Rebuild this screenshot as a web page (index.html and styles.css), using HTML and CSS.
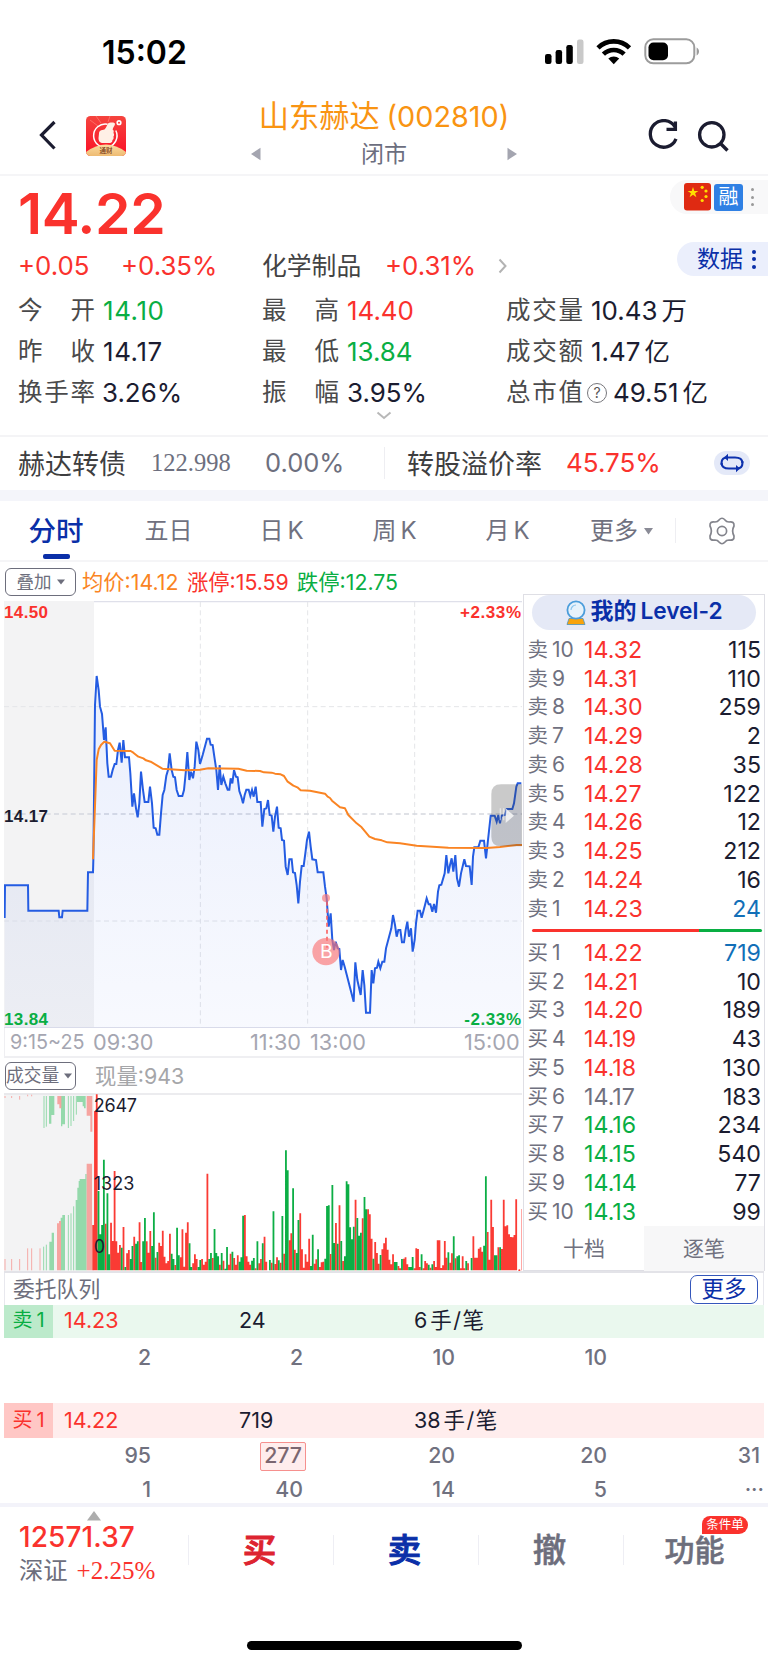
FILE: index.html
```html
<!DOCTYPE html>
<html lang="zh-CN">
<head>
<meta charset="utf-8">
<title>山东赫达 (002810)</title>
<link rel="stylesheet" href="styles.css">
</head>
<body>
<div class="screen">
  <div class="status">
    <span class="clock">15:02</span>
    <svg class="status-icons" width="160" height="30" viewBox="0 0 160 30">
      <g><rect x="1" y="16" width="6.500" height="10" rx="2.200"/><rect x="11.600" y="12" width="6.500" height="14" rx="2.200"/><rect x="22.300" y="7" width="6.500" height="19" rx="2.200"/><rect x="33" y="1.500" width="6.500" height="24.500" rx="2.200" fill="#c9c9c9"/></g>
      <g fill="none" stroke="#000" stroke-width="4.600"><path d="M54 9.800a22.500 22.500 0 0 1 31.500 0"/><path d="M59.400 16.200a14.800 14.800 0 0 1 20.700 0"/></g>
      <path d="M64.300 20.600a8 8 0 0 1 10.900 0L69.750 26.200z"/>
      <rect x="101.300" y="1.300" width="49" height="24" rx="8" fill="none" stroke="#9c9c9c" stroke-width="2"/>
      <rect x="104.500" y="4.500" width="19.500" height="17.800" rx="5"/><path d="M152.600 9.500c3.200 1.400 3.200 6.600 0 8z" fill="#9c9c9c"/>
    </svg>
  </div>

  <header class="header">
    <svg class="back" width="20" height="32" viewBox="0 0 20 32"><path d="M16.500 3L3.500 16L16.500 29.500" fill="none" stroke="#1b1c30" stroke-width="3.200"/></svg>
    <svg class="app" width="40" height="40" viewBox="0 0 40 40">
      <defs><linearGradient id="red" x1="0" y1="0" x2="0" y2="1"><stop offset="0" stop-color="#f5443e"/><stop offset="1" stop-color="#fb1027"/></linearGradient>
      <linearGradient id="gold" x1="0" y1="0" x2="0" y2="1"><stop offset="0" stop-color="#fbdba0"/><stop offset="1" stop-color="#eebb72"/></linearGradient>
      <clipPath id="appclip"><rect width="40" height="40" rx="4.500"/></clipPath></defs>
      <g clip-path="url(#appclip)"><rect width="40" height="40" fill="url(#red)"/>
      <path d="M10 0l5 7M24 0l-2 6M4 4l8 6" stroke="#ff8d80" stroke-width=".6"/>
      <path d="M21.500 8.200A11.700 11.700 0 1 0 29.800 14.500" fill="none" stroke="#fff" stroke-width="1.500"/>
      <path d="M13 17.500c0-2.200 1.500-3.500 3.400-3.500 1.500 0 2.800-.8 3.600-2.500l1.700-3.600c1.200-1.900 7-2 7.300-.2.200 1.600-1.800 3.200-2.400 5.800 1.600 1 1.200 2.800.8 3.600 1 1 .9 2.800 0 3.600.6 1.400 0 2.800-1 3.400.2 1.600-.8 3-2.600 3h-6.500C13.800 27 12.500 25 12.500 22z" fill="#fff0e6"/>
      <circle cx="33" cy="6.700" r="2.600" fill="#fff"/><circle cx="33" cy="6.700" r="1" fill="#f33"/>
      <path d="M0 40V36Q20 21 40 36V40z" fill="url(#gold)"/></g>
      <text x="20" y="37" class="app-text">通财</text>
    </svg>
    <div class="titles">
      <div class="title">山东赫达<span>(002810)</span></div>
      <div class="market">
        <svg width="12" height="14" viewBox="0 0 12 14"><path d="M1 7L10.500 .8V13.200z"/></svg>
        <span>闭市</span>
        <svg width="12" height="14" viewBox="0 0 12 14"><path d="M11 7L1.500 .8V13.200z"/></svg>
      </div>
    </div>
    <svg class="tools" width="84" height="34" viewBox="0 0 84 34" fill="none" stroke="#1b1c30" stroke-width="3.300">
      <path d="M28 8A13.300 13.300 0 1 0 29 19.800"/><path d="M19.500 10.300H28.400V2.500"/>
      <circle cx="64.800" cy="15.800" r="12.200"/><path d="M73.500 24.500L80.500 31.500"/>
    </svg>
  </header>

  <section class="quote">
    <div class="flags">
      <svg width="28" height="28" viewBox="0 0 28 28"><rect width="27" height="27.500" rx="3" fill="#df2a12"/><g fill="#ffde00"><path d="M9 4l1.300 3.900h4.100l-3.300 2.400 1.300 3.900L9 11.800l-3.400 2.400 1.300-3.900-3.300-2.400h4.100z"/><circle cx="18.200" cy="4.300" r="1.600"/><circle cx="22" cy="8" r="1.600"/><circle cx="22" cy="13.500" r="1.600"/><circle cx="18.200" cy="17.500" r="1.600"/></g></svg>
      <span class="rong">融</span>
      <span class="dots"><i></i><i></i><i></i></span>
    </div>
    <div class="data-btn">数据<span class="dots"><i></i><i></i><i></i></span></div>
    <div class="price">14.22</div>
    <div class="change"><span class="c1">+0.05</span><span class="c2">+0.35%</span><span class="sector">化学制品</span><span class="c3">+0.31%</span>
      <svg width="10" height="16" viewBox="0 0 10 16"><path d="M1.500 1.500L7.500 8L1.500 14.500" fill="none" stroke="#b3b3b3" stroke-width="2"/></svg></div>
    <div class="stats">
      <div><span class="lab"><b>今</b><b>开</b></span><em class="dn wide">14.10</em></div>
      <div><span class="lab"><b>最</b><b>高</b></span><em class="up">14.40</em></div>
      <div><span class="lab"><b>成</b><b>交</b><b>量</b></span><em>10.43<u>万</u></em></div>
      <div><span class="lab"><b>昨</b><b>收</b></span><em class="wide">14.17</em></div>
      <div><span class="lab"><b>最</b><b>低</b></span><em class="dn">13.84</em></div>
      <div><span class="lab"><b>成</b><b>交</b><b>额</b></span><em>1.47<u>亿</u></em></div>
      <div><span class="lab"><b>换</b><b>手</b><b>率</b></span><em class="near">3.26%</em></div>
      <div><span class="lab"><b>振</b><b>幅</b></span><em>3.95%</em></div>
      <div><span class="lab"><b>总</b><b>市</b><b>值</b></span><span class="help">?</span><em class="cap">49.51<u>亿</u></em></div>
    </div>
    <svg class="expand" width="16" height="9" viewBox="0 0 16 9"><path d="M1.500 1.500L8 7L14.500 1.500" fill="none" stroke="#b8b8b8" stroke-width="2"/></svg>
  </section>

  <section class="bond">
    <span class="bname">赫达转债</span><span class="bprice">122.998</span><span class="bpct">0.00%</span>
    <span class="vline"></span><span class="prem">转股溢价率</span><span class="ppct">45.75%</span>
    <span class="swap"><svg width="26" height="20" viewBox="0 0 26 20"><g fill="none" stroke="#0d31ad" stroke-width="2.100"><path d="M2.600 12V9.500Q2.600 4.500 8.500 4.500H16Q23.400 4.500 23.400 10"/><path d="M23.400 8V10.500Q23.400 15.500 17.500 15.500H10Q2.600 15.500 2.600 10"/></g><path d="M9 .8V8L5 4.500zM17 12V19.200L21 15.500z" fill="#0d31ad"/></svg></span>
  </section>

  <nav class="tabs">
    <span class="t on">分时</span><span class="t">五日</span><span class="t">日<i>K</i></span><span class="t">周<i>K</i></span><span class="t">月<i>K</i></span>
    <span class="t more">更多<svg width="9" height="8" viewBox="0 0 9 8"><path d="M0 1H9L4.500 7.500z" fill="#8a8b96"/></svg></span>
    <span class="vline"></span>
    <svg class="gear" width="28" height="30" viewBox="-14 -15 28 30" fill="none" stroke="#83848c" stroke-width="1.700" stroke-linejoin="round"><path d="M-3 -11Q0 -14.500 3 -11Q4.300 -9 7 -9Q12.500 -10 12 -5Q9.300 0 12 5Q12.500 10 7 9Q4.300 9 3 11Q0 14.500 -3 11Q-4.300 9 -7 9Q-12.500 10 -12 5Q-9.300 0 -12 -5Q-12.500 -10 -7 -9Q-4.300 -9 -3 -11Z"/><circle r="4.600"/></svg>
  </nav>

  <main class="trade">
    <div class="left">
      <div class="legend"><span class="pick">叠加<svg width="8" height="6" viewBox="0 0 8 6"><path d="M0 .5H8L4 5.500z"/></svg></span><span class="avg">均价:14.12</span><span class="hi">涨停:15.59</span><span class="lo">跌停:12.75</span></div>
      <svg class="chart" width="518" height="427" viewBox="12 33 1554 1281">
        <defs><linearGradient id="fill" x1="0" y1="0" x2="0" y2="1"><stop offset="0" stop-color="#2c5be6" stop-opacity=".1"/><stop offset="1" stop-color="#2c5be6" stop-opacity=".035"/></linearGradient></defs>
        <rect x="12" y="33" width="270" height="1281" class="pre"/>
        <path d="M282 35H1566M12 1313H1566" stroke="#dfe0ea" stroke-width="4"/>
        <g class="grid"><path d="M12 350H1566M12 993H1566M601 36V1314M923 36V1314M1244 36V1314"/><path class="mid" d="M12 672H1566"/></g>
        <path id="area" fill="url(#fill)"/>
        <path id="line" fill="none" stroke="#245ce2" stroke-width="6"/>
        <path id="mean" fill="none" stroke="#fa8423" stroke-width="6" stroke-linejoin="round"/>
        <g class="mark"><circle cx="978" cy="924" r="12"/><path d="M981 935V1080" stroke="#fa6464" stroke-width="5" stroke-dasharray="12 9"/><circle cx="978" cy="1085" r="41"/></g>
        <text x="979" y="1105" class="b">B</text>
        <path d="M1566 583H1503Q1474 583 1474 612V740Q1474 769 1503 769H1566z" fill="#3c3c3c" opacity=".27"/>
        <path d="M1501 655v36M1511 655v36" stroke="#fff" stroke-width="4" opacity=".5"/><path d="M1517 655L1542 677L1517 699z" fill="#fff" opacity=".75"/>
        <g class="scale"><text x="12" y="85" textLength="132" class="red">14.50</text><text x="12" y="695" textLength="132">14.17</text><text x="12" y="1306" textLength="132" class="green">13.84</text><text x="1380" y="85" textLength="183" class="red">+2.33%</text><text x="1393" y="1306" textLength="170" class="green">-2.33%</text></g>
      </svg>
      <div class="axis"><span>9:15~25</span><span>09:30</span><span>11:30</span><span>13:00</span><span>15:00</span></div>
      <div class="volbar"><span class="pick vol">成交量<svg width="8" height="6" viewBox="0 0 8 6"><path d="M0 .5H8L4 5.500z"/></svg></span><span class="now">现量:943</span></div>
      <svg class="volume" width="518" height="178" viewBox="12 216 1554 534">
        <rect x="12" y="216" width="270" height="534" class="pre"/>
        <path d="M12 219H1566" stroke="#e6e6ea" stroke-width="4"/>
        <g stroke-width="3"><path stroke="#f6aaa7" d="M15 748V714M35 748V714M59 748V714M83 748V682M95 748V682M120 748V682M15 225V231M35 225V231M59 225V236M83 221V226M95 221V226"/>
        <path stroke="#94d9ab" d="M131 748V677M139 748V671M205 748V582M213 748V577M221 748V556M132 225V321M139 225V317M205 225V321M213 225V315M221 225V300M229 225V281"/></g>
        <path fill="#94d9ab" d="M148 748V662H155V635H162V748zM182 748V590H187V582H195V748zM227 748V537H232V500H236V480H239V474H256V459H260V748zM147 225V308H154V282H163V225zM183 225V316H187V310H195V225zM231 225V243H248V256H252V262H257V225z"/>
        <path fill="#f6a4a0" d="M171 748V607H177V600H183V748zM260 748V428H276V748zM172 225V250H178V262H184V225zM260 225V284H271V332H277V225z"/>
        <path id="rise" stroke="#fa3b34" stroke-width="5.400"/><path id="fall" stroke="#0cae45" stroke-width="5.400"/>
        <path d="M1565 564V748" stroke="#ff9a96" stroke-width="3"/><circle cx="1558" cy="748" r="3" fill="#fa3b34"/>
        <g class="vtext"><text x="281" y="272" textLength="130">2647</text><text x="281" y="507" textLength="122">1323</text><text x="281" y="696">0</text></g>
      </svg>
    </div>

    <aside class="book">
      <div class="level"><svg width="22" height="26" viewBox="0 0 22 26"><path d="M4 18.500L2 24.500H20L18 18.500z" fill="#f8a30c" stroke="#4b93bb" stroke-width=".8"/><circle cx="11" cy="10" r="8.600" fill="#e6f2fb" stroke="#4b9ddb" stroke-width="1.800"/><path d="M6 10a5 5 0 0 1 5-5" fill="none" stroke="#8bc5ee" stroke-width="1.200"/></svg><span>我的<i>Level-2</i></span></div>
      <div class="rows" id="asks"></div>
      <div class="ratio"></div>
      <div class="rows" id="bids"></div>
      <div class="switch"><span>十档</span><span class="off">逐笔</span></div>
    </aside>
  </main>

  <section class="queue">
    <div class="qhead"><span class="qname">委托队列</span><span class="qmore">更多</span></div>
    <div class="qbar sell"><span class="tag">卖<i>1</i></span><span class="red">14.23</span><span>24</span><span>6<u>手/笔</u></span></div>
    <div class="nums gap"><span>2</span><span>2</span><span>10</span><span>10</span><span></span></div>
    <div class="qbar buy"><span class="tag">买<i>1</i></span><span class="red">14.22</span><span>719</span><span>38<u>手/笔</u></span></div>
    <div class="nums"><span>95</span><span><mark>277</mark></span><span>20</span><span>20</span><span>31</span></div>
    <div class="nums last"><span>1</span><span>40</span><span>14</span><span>5</span><span class="ell">···</span></div>
  </section>

  <footer class="actions">
    <div class="index">
      <svg width="14" height="10" viewBox="0 0 14 10"><path d="M0 9.500L7 0L14 9.500z" fill="#adadad"/></svg>
      <div class="ival">12571.37</div>
      <div class="iname">深证<span>+2.25%</span></div>
    </div>
    <div class="act buy">买</div><div class="act sell">卖</div><div class="act">撤</div><div class="act fn">功能<span class="badge">条件单</span></div>
  </footer>
  <div class="home"><span></span></div>
</div>
<script src="app.js"></script>
</body>
</html>
```

FILE: styles.css
```css
* { box-sizing: border-box; }
body { margin: 0; background: #fff; font-family: Inter, "Noto Sans CJK SC", sans-serif; color: #1b1c30; }
i, em { font-style: normal; }
u { text-decoration: none; }
b { font-weight: 400; }
.screen { width: 768px; height: 1665px; overflow: hidden; display: flex; flex-direction: column; white-space: nowrap; }
.red { color: #fa322d; fill: #fa322d; }
.green { fill: #09ae43; }

.status { height: 88px; display: flex; justify-content: space-between; padding: 33px 64px 0 102px; color: #000; }
.clock { font-size: 32px; font-weight: 600; line-height: 40px; }
.status-icons { margin-top: 4.500px; }

.header { height: 86px; display: flex; border-bottom: 2px solid #f5f5f7; box-sizing: content-box; }
.back { margin: 31px 0 0 38px; }
.app { margin: 28px 0 0 28px; }
.app-text { font: 500 6.500px "Noto Sans CJK SC", sans-serif; text-anchor: middle; fill: #7b3a17; }
.titles { width: 268px; margin-left: 124px; text-align: center; }
.title { font-size: 30.200px; line-height: 38px; padding-top: 9px; color: #f99412; }
.title span { font-size: 28.800px; margin-left: 7px; }
.market { display: flex; align-items: center; justify-content: space-between; font-size: 23px; line-height: 32px; color: #6c6e7e; padding: 2px 0 0; fill: #a4a5b0; }
.tools { margin: 31px 0 0 129px; }

.quote { height: 259px; position: relative; }
.flags { position: absolute; right: 0; top: 4px; width: 98px; height: 34px; border-radius: 17px 0 0 17px; background: #f8f8f9; display: flex; align-items: center; padding-left: 14px; gap: 2px; }
.rong { width: 29px; height: 27px; line-height: 26px; background: #2f80e4; color: #fff; border-radius: 3px; font-size: 20px; text-align: center; }
.dots { display: flex; flex-direction: column; gap: 4.500px; margin-left: 6px; }
.dots i { width: 3px; height: 3px; border-radius: 50%; background: #999; }
.data-btn { position: absolute; right: 0; top: 66px; width: 91px; height: 34px; border-radius: 17px 0 0 17px; background: #ebeffc; color: #0a2fa8; font-size: 23px; line-height: 34px; padding-left: 20px; display: flex; align-items: center; }
.data-btn .dots { margin-left: 9px; gap: 3.500px; }
.data-btn .dots i { width: 4px; height: 4px; background: #0a2fa8; }
.price { font-size: 57px; font-weight: 600; line-height: 60px; padding: 8px 0 0 18px; color: #fa322d; letter-spacing: -.4px; height: 69px; }
.change { display: flex; height: 42px; line-height: 42px; font-size: 25.800px; color: #fa322d; padding-left: 18px; align-items: center; }
.c1 { width: 103px; } .c2 { width: 141px; }
.sector { width: 123px; font-size: 24.800px; color: #434344; }
.c3 { width: 113px; }
.stats { display: grid; grid-template-columns: 244px 244px 1fr; padding-left: 18px; grid-auto-rows: 41px; line-height: 41px; margin-top: 3px; }
.stats > div { display: flex; align-items: center; }
.lab { width: 77px; display: flex; justify-content: space-between; font-size: 24.500px; color: #4a4a4b; }
.stats em { font-size: 25.900px; margin-left: 8px; }
.stats .wide { letter-spacing: .6px; }
.stats em u { font-size: 25.500px; margin-left: 4px; }
.stats .up { color: #fa322d; } .stats .dn { color: #09ae43; }
.stats .near { margin-left: 7px; }
.help { width: 20px; height: 20px; border: 1.500px solid #77777c; border-radius: 50%; font-size: 14px; line-height: 17px; text-align: center; color: #555; margin-left: 4px; }
.stats .cap { margin-left: 6px; }
.expand { position: absolute; left: 376px; bottom: 15px; }

.bond { height: 55px; border-top: 2px solid #f4f4f6; display: flex; align-items: center; padding: 0 0 2px 18px; font-size: 27px; color: #3e3e40; }
.bname { width: 133px; }
.bprice { width: 114px; font: 24.500px "Liberation Serif", serif; color: #6d6f7e; padding-top: 1px; }
.bpct { width: 119px; font-size: 25.500px; color: #6d6f7e; }
.vline { width: 1px; height: 32px; background: #eeeef2; }
.prem { width: 159px; margin-left: 22px; }
.ppct { width: 148px; font-size: 26px; color: #fa322d; }
.swap { width: 36px; height: 24px; border-radius: 12px; background: #e4e9f8; display: flex; align-items: center; justify-content: center; }

.tabs { height: 72px; border-top: 11px solid #f4f5fa; border-bottom: 2px solid #f5f5f7; display: flex; align-items: center; position: relative; font-size: 24px; color: #70717f; }
.t { width: 113px; text-align: center; flex: none; line-height: 56px; }
.t i { margin-left: 4px; }
.on { width: 112px; font-size: 27.500px; color: #0a2fa8; font-weight: 500; position: relative; }
.on::after { content: ""; position: absolute; left: 43px; bottom: 0; width: 27px; height: 5px; border-radius: 2px; background: #0a2fa8; }
.more { width: 111px; text-align: left; padding-left: 26px; }
.more svg { margin-left: 6px; vertical-align: 4px; }
.tabs .vline { height: 25px; }
.gear { margin-left: 32px; }

.trade { height: 709px; display: flex; }
.left { width: 523px; flex: none; padding-left: 4px; display: flex; flex-direction: column; }
.legend { height: 39px; display: flex; align-items: center; padding: 0 0 0 1px; font-size: 21.300px; }
.legend > span { flex: none; }
.legend > span:not(.pick) { padding-bottom: 3px; }
.pick { width: 71px; height: 28px; border: 1.500px solid #6d6e7c; border-radius: 6px; font-size: 17.500px; line-height: 25px; color: #6d6e7c; display: flex; align-items: center; justify-content: center; gap: 5px; fill: #6d6e7c; }
.vol { justify-content: flex-start; padding-left: 0; flex: none; font-size: 17.800px; }
.legend .avg { color: #fa8423; width: 105px; margin-left: 6px; }
.legend .hi { color: #fa322d; width: 110px; }
.lo { color: #09ae43; }
.chart, .volume { display: block; flex: none; }
.pre { fill: #f3f3f4; }
.grid path { stroke: #e4e5e8; stroke-width: 3; stroke-dasharray: 15 10; }
.grid .mid { stroke: #d5d7de; stroke-width: 4; }
.mark circle { fill: #fa7474; opacity: .65; }
.b { font: 400 58px Inter, sans-serif; fill: #fff; text-anchor: middle; }
.scale text { font-family: "Liberation Sans", sans-serif; font-weight: 700; font-size: 51px; }
.scale text:not([class]) { fill: #1b1c30; }
.axis { height: 30px; display: grid; grid-template-columns: 83px 157px 60px 1fr 59px; padding-left: 5px; border: solid #efeff2; border-width: 0 0 2px 1px; font-size: 21.700px; line-height: 28px; color: #a5a6b1; }
.axis span:first-child { font-size: 19.800px; }
.volbar { height: 35px; display: flex; align-items: center; padding-left: 1px; gap: 19px; font-size: 21.400px; color: #a5a6a9; }
.now { padding-bottom: 2px; }
.vtext text { font: 54px Inter, sans-serif; fill: #1b1c30; }

.book { width: 242px; margin-top: 32px; border: 1.500px solid #dfdfe5; padding: 0 4px 0 4px; }
.level { height: 35px; margin: 0 4px; border-radius: 18px; background: #e5e9f6; display: flex; align-items: center; justify-content: center; gap: 3px; font-size: 23px; line-height: 32px; font-weight: 700; color: #0a2fa8; }
.level span { padding-bottom: 3px; }
.level i { margin-left: 4px; font-weight: 600; font-size: 22.700px; }
.rows { padding-top: 6px; }
.row { display: grid; grid-template-columns: 56px 80px 1fr; align-items: center; height: 28.750px; font-size: 23.200px; line-height: 28px; }
.row .n { font-size: 20.500px; color: #70717f; margin-left: -.5px; }
.row .n i { margin-left: 4px; font-size: 21px; }
.row .q { text-align: right; margin-right: -1px; }
.up { color: #fa322d; } .dn { color: #09ae43; } .eq { color: #70717f; } .hot { color: #126fb8; }
.ratio { height: 3.500px; margin: 5.500px -2px 0 4px; border-radius: 2px; background: linear-gradient(90deg, #fa322d 72.500%, #09ae43 72.500%); }
#asks { padding-top: 5.500px; }
#bids { padding-top: 6.500px; }
.switch { height: 44px; display: grid; grid-template-columns: 1fr 1fr; margin: 0 -4px; font-size: 21px; line-height: 46px; text-align: center; color: #70717f; }
.off { background: #f7f7f8; }

.queue { height: 232px; border-top: 2px solid #e3e3e8; margin: 0 4px; }
.qhead { height: 32px; display: flex; align-items: center; justify-content: space-between; padding: 0 5px 0 8px; border: solid #e8e8ee; border-width: 0 1px; font-size: 21.800px; color: #6d6e7c; }
.qname { padding-bottom: 3px; }
.qmore { width: 68px; height: 29px; border: 1.500px solid #3557bb; border-radius: 7px; color: #0a2fa8; font-size: 22.500px; line-height: 26px; text-align: center; }
.qbar { height: 33px; display: grid; grid-template-columns: 48px 187px 175px 1fr; line-height: 31px; font-size: 21.500px; }
.qbar > span:nth-child(2) { padding-left: 12px; }
.qbar u { margin-left: 3px; letter-spacing: 1.500px; }
.qbar .tag { text-align: center; font-size: 20px; width: 49px; }
.tag i { margin-left: 4px; }
.sell.qbar { background: #eaf8ee; } .sell .tag { background: #bceacb; color: #09ae43; }
.buy.qbar { background: #ffeded; height: 35px; line-height: 35px; } .buy .tag { background: #ffc7c5; color: #fa322d; }
.nums { height: 34px; display: grid; grid-template-columns: 147px 152px 152px 152px 153px; text-align: right; font-size: 21.300px; font-weight: 500; line-height: 34px; color: #70717f; }
.gap { height: 65px; line-height: 38px; }
.nums mark { display: inline-block; margin-right: -3px; padding: 0 3px; height: 29px; line-height: 25px; border: 1.500px solid #f6908e; background: #ffeded; color: #7b6670; border-radius: 2px; }
.ell { margin-right: -4px; }

.actions { height: 127px; border-top: 4px solid #f3f3fa; display: flex; }
.index { width: 188px; padding: 4px 0 0 19px; }
.index svg { display: block; margin-left: 68px; }
.ival { font-size: 28px; font-weight: 500; line-height: 34px; color: #fa322d; margin-top: -1px; letter-spacing: .1px; }
.iname { font-size: 24.300px; line-height: 33px; color: #6d6e7c; }
.iname span { font-family: "Liberation Serif", serif; font-size: 25px; color: #fa322d; margin-left: 9px; }
.act { width: 145px; height: 30px; margin-top: 28px; border-left: 1px solid #eeeef4; padding-right: 3px; text-align: center; font-size: 33.500px; line-height: 30px; font-weight: 500; color: #6d6e7c; position: relative; -webkit-text-stroke: .5px currentColor; }
.act.buy { color: #dd2430; } .act.sell { color: #0a2fa8; }
.act.buy, .act.sell { -webkit-text-stroke-width: 1px; }
.fn { font-size: 30px; }
.badge { position: absolute; left: 78px; top: -19px; width: 46px; height: 18px; border-radius: 8px 9px 9px 0; background: #fa322d; color: #fff; font-size: 12.500px; line-height: 17px; font-weight: 400; -webkit-text-stroke: 0; }
.home { height: 33px; display: flex; justify-content: center; padding-top: 9px; }
.home span { width: 275px; height: 9px; margin-top: 2px; border-radius: 5px; background: #000; }
```

FILE: app.js
```js
const price = `14,984 15,886 84,886 85,962 176,962 178,982 186,982 188,962 262,962 264,847 279,847 280,810 285,345 290,258 296,300 300,350 306,372 312,450 317,412 322,520 326,560 333,560 338,540 344,522 349,522 354,480 359,458 365,518 370,450 375,502 387,502 391,550 397,650 402,610 408,655 413,682 418,640 423,545 429,600 434,636 445,636 450,590 456,640 461,713 467,715 472,734 478,734 483,670 488,615 493,600 499,557 504,540 509,490 515,540 520,560 525,562 530,600 536,618 547,618 552,600 558,540 562,486 568,570 573,545 579,565 584,530 589,455 595,480 600,522 608,495 621,446 628,446 632,464 638,465 643,500 649,540 654,600 659,525 664,585 670,560 676,580 683,599 688,599 692,565 697,580 702,540 708,560 713,562 718,603 724,620 729,640 734,615 739,599 746,599 751,618 756,600 761,620 767,590 772,636 782,636 787,710 793,657 799,655 804,630 809,675 815,677 820,725 825,680 831,650 836,713 842,715 846,750 852,752 857,830 863,855 868,808 875,808 879,847 885,849 890,885 895,940 900,875 905,828 911,828 916,790 921,750 927,725 932,770 937,808 948,810 953,847 970,847 975,890 980,925 986,1010 992,970 997,1050 1002,1080 1007,1055 1013,1075 1018,1077 1023,1140 1028,1110 1034,1130 1061,1235 1066,1117 1072,1170 1082,1215 1088,1140 1093,1185 1098,1268 1110,1268 1115,1140 1120,1180 1125,1135 1131,1133 1135,1115 1141,1135 1147,1115 1153,1115 1158,1075 1174,1015 1179,975 1185,1005 1190,1040 1195,1020 1201,1020 1206,1057 1212,1057 1217,1020 1222,995 1227,1040 1233,1015 1238,1085 1244,1050 1248,1000 1253,962 1260,962 1265,983 1275,945 1280,925 1286,943 1291,943 1297,965 1302,942 1308,968 1314,905 1318,886 1324,884 1334,850 1339,795 1345,850 1350,825 1355,805 1360,845 1366,795 1371,865 1377,890 1383,850 1393,808 1398,828 1409,829 1415,885 1419,800 1423,772 1435,772 1441,752 1452,752 1458,805 1464,750 1472,677 1484,677 1490,695 1495,675 1500,700 1504,677 1515,675 1520,657 1537,657 1542,640 1549,590 1553,580 1564,580`;
const mean = `279,808 286,620 290,510 296,478 303,465 313,455 330,460 344,482 392,483 400,488 415,500 430,505 438,511 452,515 487,536 555,541 600,539 625,535 715,536 740,542 780,543 792,547 815,548 825,551 842,553 852,558 862,574 880,587 892,592 902,601 930,602 975,611 983,620 990,624 996,632 1020,652 1035,655 1045,675 1070,700 1085,712 1108,740 1125,747 1145,751 1162,757 1200,760 1250,767 1310,771 1345,773 1460,774 1500,771 1550,765 1566,765`;
document.getElementById("line").setAttribute("d", "M" + price);
document.getElementById("area").setAttribute("d", "M" + price + " 1564,1314 14,1314Z");
document.getElementById("mean").setAttribute("d", "M" + mean);

// One entry per minute: direction and bar top
const bars = `r612 r270 r220 g510 g640 g612 g416 r608 g517 g700 r605 r660 r450 r661 r695 r672 g680 r618 g738 r697 r687 g714 g675 r647 g668 g661 r604 r723 g661 g591 r661 r695 r630 g675 g574 r710 g693 r665 r675 r629 r707 r727 r720 r638 g698 g714 r732 g620 g703 r709 r625 r737 r635 r604 g667 g738 r727 r700 r714 g738 g717 r714 r731 r722 r458 g714 g696 r711 g624 g696 g706 r731 g696 r719 g743 g678 r731 r698 g692 r711 r731 r703 g722 g709 g584 r582 r706 r722 r731 g719 g711 r742 g661 r727 r714 g667 r647 r722 g748 g717 r725 g571 r729 r709 g718 r725 g585 r698 g388 g448 r658 r637 g502 r686 g696 g597 r577 r685 r740 r700 r722 r653 g735 g641 r728 r715 g685 r738 r724 r722 g713 g555 g553 r699 g492 g666 r606 g668 r553 g660 r720 g706 g481 g490 g619 g655 g617 r536 g591 g644 g635 r592 g528 g565 r565 r580 r653 g713 r663 r696 r728 g702 r685 r667 r650 r686 r716 r730 r700 g723 g723 r735 r742 g714 r713 r709 r730 g738 g738 g708 r742 r682 r684 r738 g700 r742 r720 r727 g731 r740 g730 r720 r738 r658 r658 r741 r733 r660 r710 g694 r725 r697 g646 r712 g706 g703 r742 r706 r742 g720 r727 g748 g711 r646 r710 r710 r683 r679 r692 g674 g466 r633 r716 r536 r618 g703 g703 r679 g679 r684 r536 r616 r613 r640 r648 r649 r642 r535`.split(" ");
const paths = { r: "", g: "" };
bars.forEach((b, i) => { paths[b[0]] += `M${(279.5 + i * 5.355).toFixed(1)} 748V${b.slice(1)}`; });
document.getElementById("rise").setAttribute("d", paths.r);
document.getElementById("fall").setAttribute("d", paths.g);

const asks = [[10, 14.32, 115], [9, 14.31, 110], [8, 14.30, 259], [7, 14.29, 2], [6, 14.28, 35], [5, 14.27, 122], [4, 14.26, 12], [3, 14.25, 212], [2, 14.24, 16], [1, 14.23, 24]];
const bids = [[1, 14.22, 719], [2, 14.21, 10], [3, 14.20, 189], [4, 14.19, 43], [5, 14.18, 130], [6, 14.17, 183], [7, 14.16, 234], [8, 14.15, 540], [9, 14.14, 77], [10, 14.13, 99]];
function fill(id, side, rows) {
  document.getElementById(id).innerHTML = rows.map(([n, p, q]) => {
    const tone = p > 14.17 ? "up" : p < 14.17 ? "dn" : "eq";
    return `<div class="row"><span class="n">${side}<i>${n}</i></span><span class="${tone}">${p.toFixed(2)}</span><span class="q${n === 1 ? " hot" : ""}">${q}</span></div>`;
  }).join("");
}
fill("asks", "卖", asks);
fill("bids", "买", bids);
```
